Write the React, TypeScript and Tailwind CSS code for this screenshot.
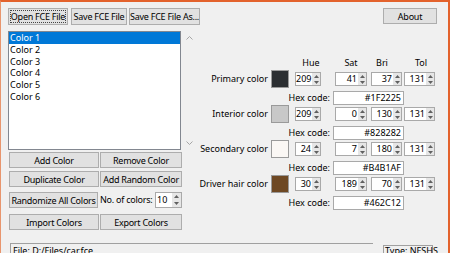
import React from 'react';

const font = { fontFamily: '"Noto Sans", "Open Sans", sans-serif' };

const Btn = ({ label, className = '', focus = false }: { label: string; className?: string; focus?: boolean }) => (
  <div className={`flex items-center justify-center bg-[#e1e1e1] border border-[#adadad] text-[9px] tracking-[-0.25px] text-black leading-none whitespace-nowrap ${className}`}>
    {focus ? (
      <span className="border border-dotted border-[#444] w-full h-full flex items-center justify-center">{label}</span>
    ) : (
      label
    )}
  </div>
);

const Arrows = ({ w }: { w: string }) => (
  <div className={`${w} flex flex-col`}>
    <div className="flex-1 bg-[#e6e6e6] flex items-center justify-center">
      <svg width="5" height="3" viewBox="0 0 5 3"><path d="M0 3 L2.5 0 L5 3 Z" fill="#606060" /></svg>
    </div>
    <div className="flex-1 bg-[#e6e6e6] flex items-center justify-center">
      <svg width="5" height="3" viewBox="0 0 5 3"><path d="M0 0 L2.5 3 L5 0 Z" fill="#606060" /></svg>
    </div>
  </div>
);

const Spin = ({ value, w }: { value: number; w: string }) => (
  <div className={`flex h-[14px] bg-white border border-[#a9a9a9] ${w}`}>
    <div className="flex-1 text-right text-[9px] leading-[12px] pr-[1px]">{value}</div>
    <Arrows w="w-[8px]" />
  </div>
);

const colors = [
  { label: 'Primary color', swatch: '#2b2e31', h: 209, s: 41, b: 37, t: 131, hex: '#1F2225' },
  { label: 'Interior color', swatch: '#c8c8c8', h: 209, s: 0, b: 130, t: 131, hex: '#828282' },
  { label: 'Secondary color', swatch: '#faf7f4', h: 24, s: 7, b: 180, t: 131, hex: '#B4B1AF' },
  { label: 'Driver hair color', swatch: '#6e4823', h: 30, s: 189, b: 70, t: 131, hex: '#462C12' },
];

export default function App() {
  return (
    <div
      style={font}
      className="w-[450px] h-[253px] overflow-hidden bg-[#f0f0f0] border-t-2 border-l border-r-2 border-t-[#e3622c] border-l-[#e8956d] border-r-[#e3622c] text-black whitespace-nowrap"
    >
      {/* toolbar */}
      <div className="flex pt-[6px] pl-[7px] pr-[11px]">
        <Btn label="Open FCE File" focus className="w-[60px] h-[17px] p-[1px] border-[#8a8a8a]" />
        <Btn label="Save FCE File" className="w-[56px] h-[17px] ml-[3px]" />
        <Btn label="Save FCE File As..." className="w-[71px] h-[17px] ml-[2px]" />
        <div className="flex-1" />
        <Btn label="About" className="w-[54px] h-[16px]" />
      </div>

      <div className="flex mt-[6px]">
        {/* left column */}
        <div className="pl-[7px] w-[196px] flex flex-col">
          <div className="flex h-[119px]">
            <div className="w-[173px] bg-white border border-[#828790] text-[9px] leading-[11.8px]">
              <div className="bg-[#0078d7] text-white pl-[1px]">Color 1</div>
              {['Color 2', 'Color 3', 'Color 4', 'Color 5', 'Color 6'].map(c => (
                <div key={c} className="pl-[1px]">{c}</div>
              ))}
            </div>
            <div className="w-[16px] flex flex-col items-center justify-between py-[5px]">
              <svg width="7" height="4" viewBox="0 0 7 4"><path d="M0.5 3.5 L3.5 0.5 L6.5 3.5" stroke="#a6a6a6" fill="none" /></svg>
              <svg width="7" height="4" viewBox="0 0 7 4"><path d="M0.5 0.5 L3.5 3.5 L6.5 0.5" stroke="#a6a6a6" fill="none" /></svg>
            </div>
          </div>
          <div className="flex ml-[1px] mt-[2px] gap-[1px]">
            <Btn label="Add Color" className="w-[90px] h-[16px]" />
            <Btn label="Remove Color" className="w-[82px] h-[16px]" />
          </div>
          <div className="flex ml-[1px] mt-[3px] gap-[1px]">
            <Btn label="Duplicate Color" className="w-[90px] h-[16px]" />
            <Btn label="Add Random Color" className="w-[82px] h-[16px]" />
          </div>
          <div className="flex items-center ml-[1px] mt-[5px]">
            <Btn label="Randomize All Colors" className="w-[89px] h-[16px]" />
            <span className="ml-[2px] text-[9px] tracking-[-0.25px] w-[55px]">No. of colors:</span>
            <div className="flex h-[16px] w-[27px] bg-white border border-[#a9a9a9]">
              <div className="flex-1 text-[9px] leading-[14px] pl-[1px]">10</div>
              <Arrows w="w-[9px]" />
            </div>
          </div>
          <div className="flex ml-[1px] mt-[6px] gap-[1px]">
            <Btn label="Import Colors" className="w-[90px] h-[16px]" />
            <Btn label="Export Colors" className="w-[82px] h-[16px]" />
          </div>
        </div>

        {/* right panel */}
        <div className="flex flex-col mt-[26px] text-[9px]">
          <div className="flex h-[12px] leading-[12px]">
            <span className="ml-[99px] w-[30px] text-center">Hue</span>
            <span className="ml-[10px] w-[30px] text-center">Sat</span>
            <span className="ml-[1px] w-[30px] text-center">Bri</span>
            <span className="ml-[9px] w-[30px] text-center">Tol</span>
          </div>
          <div className="mt-[1px]">
            {colors.map(c => (
              <div key={c.label}>
                <div className="flex items-center h-[18px]">
                  <span className="w-[71px] text-right">{c.label}</span>
                  <div className="ml-[3px] w-[18px] h-[18px] border border-[#9a9a9a]" style={{ backgroundColor: c.swatch }} />
                  <Spin value={c.h} w="ml-[6px] w-[26px]" />
                  <Spin value={c.s} w="ml-[14px] w-[32px]" />
                  <Spin value={c.b} w="ml-[4px] w-[31px]" />
                  <Spin value={c.t} w="ml-[2px] w-[31px]" />
                </div>
                <div className="flex items-center h-[14px] mt-[3px]">
                  <span className="w-[133px] text-right">Hex code:</span>
                  <div className="ml-[3px] w-[71px] h-[14px] bg-white border border-[#a9a9a9] text-right pr-[2px] leading-[12px]">
                    {c.hex}
                  </div>
                </div>
              </div>
            ))}
          </div>
        </div>
      </div>

      {/* status bar */}
      <div className="flex mt-[13px] text-[9px] leading-[10px]">
        <div className="ml-[9px] w-[363px] h-[14px] border-t border-l border-[#a0a0a0] pl-[2px] pt-[2px]">File: D:/Files/car.fce</div>
        <div className="ml-[10px] mt-[2px] w-[50px] h-[12px] border border-[#a0a0a0] pl-[1px]">Type: NFSHS</div>
      </div>
    </div>
  );
}
